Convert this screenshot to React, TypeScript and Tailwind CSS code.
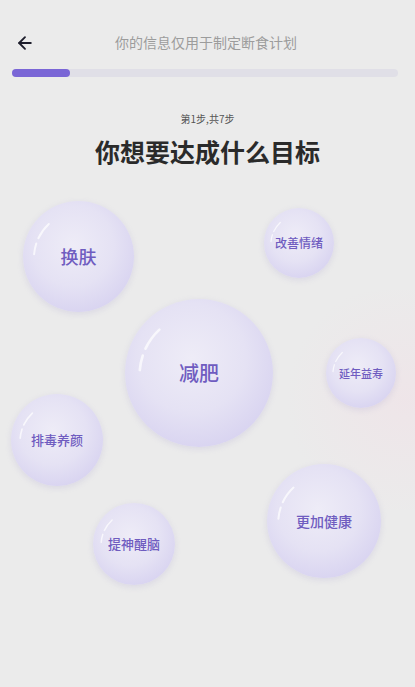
import { ArrowLeft } from 'lucide-react';

type Bubble = { label: string; x: number; y: number; d: number; text: string };

const bubbles: Bubble[] = [
  { label: '换肤', x: 23, y: 201, d: 111, text: 'text-[18px]' },
  { label: '改善情绪', x: 264, y: 208, d: 70, text: 'text-[12px]' },
  { label: '减肥', x: 125, y: 299, d: 148, text: 'text-[20px]' },
  { label: '延年益寿', x: 326, y: 338, d: 70, text: 'text-[11px]' },
  { label: '排毒养颜', x: 11, y: 394, d: 92, text: 'text-[13px]' },
  { label: '更加健康', x: 267, y: 464, d: 114, text: 'text-[14px]' },
  { label: '提神醒脑', x: 93, y: 503, d: 82, text: 'text-[13px]' },
];

function GoalBubble({ b }: { b: Bubble }) {
  return (
    <div
      className="absolute rounded-full flex items-center justify-center bg-[radial-gradient(circle_at_45%_40%,#eeecf7_0%,#e5e2f4_45%,#d7d2f0_80%,#c9c3eb_100%)] shadow-[0_2px_6px_rgba(150,140,200,0.2)]"
      style={{ left: b.x, top: b.y, width: b.d, height: b.d }}
    >
      {/* highlight arc */}
      <svg className="absolute inset-0 w-full h-full" viewBox="0 0 100 100">
        <path
          d="M10 48 A42 42 0 0 1 24 20"
          fill="none"
          stroke="white"
          strokeOpacity="0.7"
          strokeWidth="1.8"
          strokeLinecap="round"
          strokeDasharray="10 5 16"
        />
      </svg>
      <span className={`relative ${b.text} font-medium text-[#6f5cc0]`}>{b.label}</span>
    </div>
  );
}

export default function App() {
  return (
    <div
      className="relative w-[415px] h-[687px] overflow-hidden bg-[#ebebeb]"
      style={{ fontFamily: '"Noto Sans CJK SC", "Noto Sans", sans-serif' }}
    >
      <div className="absolute right-[-120px] top-[290px] w-[260px] h-[220px] rounded-full bg-[radial-gradient(circle,rgba(245,218,228,0.35)_0%,rgba(235,235,235,0)_70%)]" />

      {/* Header */}
      <div className="relative h-[86px] px-3 pt-[31px]">
        <div className="flex items-center h-6">
          <ArrowLeft className="w-5 h-5 text-[#1d1d2b] ml-[3px]" strokeWidth={2.2} />
          <div className="flex-1 text-center text-[14px] text-[#9c9c9c] pr-[26px] -mt-[2px]">你的信息仅用于制定断食计划</div>
        </div>
        <div className="mt-[14px] h-[8px] w-[386px] rounded-full bg-[#e0dfe7]">
          <div className="h-full w-[58px] rounded-full bg-[#7a66d6]" />
        </div>
      </div>

      <div className="relative text-center">
        <div className="text-[10px] text-[#555] mt-[28px] leading-none">第1步,共7步</div>
        <div className="text-[25px] font-bold text-[#2a2a2a] mt-[15px] leading-none">你想要达成什么目标</div>
      </div>

      {bubbles.map((b) => (
        <GoalBubble key={b.label} b={b} />
      ))}
    </div>
  );
}
